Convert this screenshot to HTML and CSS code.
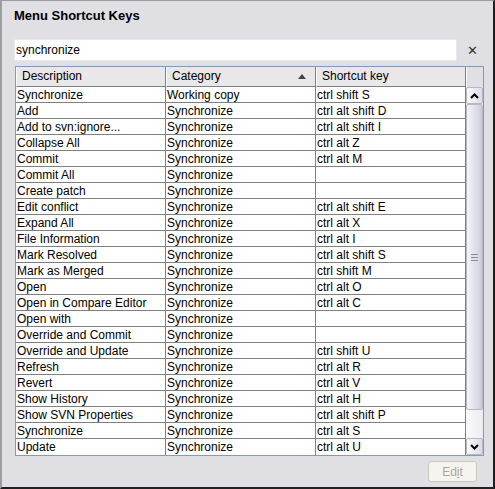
FILE: index.html
```html
<!DOCTYPE html>
<html>
<head>
	<title>Menu Shortcut Keys</title>
	<link rel="stylesheet" href="styles.css">
</head>
<body>
	<div class="window">
		<h1 class="title">Menu Shortcut Keys</h1>

		<div class="search-row">
			<div class="search-box">synchronize</div>
			<span class="clear">&#x2715;</span>
		</div>

		<div class="frame">
			<div class="head">
				<div class="hcell">Description</div>
				<div class="hcell sorted">Category <span class="arrow"></span></div>
				<div class="hcell">Shortcut key</div>
				<div class="hcell corner"></div>
			</div>
			<div class="body">
				<div class="rows" id="rows"></div>
				<div class="scrollbar">
					<div class="sbtn"><svg width="9" height="6" viewBox="0 0 9 6"><path d="M1 5 L4.5 1.5 L8 5" fill="none" stroke="#000" stroke-width="2"/></svg></div>
					<div class="thumb"><span class="grip"></span></div>
					<div class="track"></div>
					<div class="sbtn"><svg width="9" height="6" viewBox="0 0 9 6"><path d="M1 1 L4.5 4.5 L8 1" fill="none" stroke="#000" stroke-width="2"/></svg></div>
				</div>
			</div>
		</div>

		<div class="footer">
			<button class="edit-btn" disabled>Ed<u>i</u>t</button>
		</div>
	</div>

	<script>
		// Shortcut list
		const items = [
			["Synchronize", "Working copy", "ctrl shift S"],
			["Add", "Synchronize", "ctrl alt shift D"],
			["Add to svn:ignore...", "Synchronize", "ctrl alt shift I"],
			["Collapse All", "Synchronize", "ctrl alt Z"],
			["Commit", "Synchronize", "ctrl alt M"],
			["Commit All", "Synchronize", ""],
			["Create patch", "Synchronize", ""],
			["Edit conflict", "Synchronize", "ctrl alt shift E"],
			["Expand All", "Synchronize", "ctrl alt X"],
			["File Information", "Synchronize", "ctrl alt I"],
			["Mark Resolved", "Synchronize", "ctrl alt shift S"],
			["Mark as Merged", "Synchronize", "ctrl shift M"],
			["Open", "Synchronize", "ctrl alt O"],
			["Open in Compare Editor", "Synchronize", "ctrl alt C"],
			["Open with", "Synchronize", ""],
			["Override and Commit", "Synchronize", ""],
			["Override and Update", "Synchronize", "ctrl shift U"],
			["Refresh", "Synchronize", "ctrl alt R"],
			["Revert", "Synchronize", "ctrl alt V"],
			["Show History", "Synchronize", "ctrl alt H"],
			["Show SVN Properties", "Synchronize", "ctrl alt shift P"],
			["Synchronize", "Synchronize", "ctrl alt S"],
			["Update", "Synchronize", "ctrl alt U"]
		];

		const rows = document.getElementById("rows");
		items.forEach(item => {
			const row = document.createElement("div");
			row.classList.add("row");
			item.forEach(text => {
				const cell = document.createElement("div");
				cell.classList.add("cell");
				cell.textContent = text;
				row.appendChild(cell);
			});
			rows.appendChild(row);
		});
	</script>
</body>
</html>
```

FILE: styles.css
```css
* {
	margin: 0;
	padding: 0;
	box-sizing: border-box;
	font-family: 'Liberation Sans', Arial, sans-serif;
}
body {
	background-color: #e0dfe3;
	font-size: 11px;
}
.window {
	width: 495px;
	height: 489px;
	background-color: #e0dfe3;
	border-top: 1px solid #9d9da1;
	border-left: 2px solid #9d9da1;
	border-right: 2px solid #202020;
	border-bottom: 2px solid #202020;
	padding: 7px 0 0 12px;
}
.title {
	font-size: 13px;
	font-weight: bold;
	height: 16px;
	line-height: 16px;
	color: #000;
}
.search-row {
	display: flex;
	align-items: center;
	margin-top: 15px;
	height: 22px;
}
.search-box {
	width: 443px;
	height: 22px;
	background-color: #fff;
	border: 1px solid #e8e8ec;
	padding-left: 1px;
	line-height: 20px;
	font-size: 12px;
}
.clear {
	margin-left: 10px;
	font-size: 13px;
	color: #333;
}
.frame {
	margin-top: 5px;
	margin-left: 1px;
	width: 469px;
	height: 390px;
	border: 1px solid #7f9db9;
	background-color: #fff;
}
.head {
	display: flex;
	height: 20px;
	background-color: #e0dfe3;
}
.hcell {
	width: 150px;
	height: 20px;
	line-height: 19px;
	padding-left: 5px;
	font-size: 12px;
	background-color: #e8e8ea;
	border-left: 1px solid #fff;
	border-right: 1px solid #808080;
	border-bottom: 1px solid #808080;
	position: relative;
}
.hcell.corner {
	width: 17px;
	background-color: #e0dfe3;
	border-right: none;
	border-bottom: 1px solid #e0dfe3;
}
.arrow {
	position: absolute;
	right: 9px;
	top: 7px;
	border-left: 4px solid transparent;
	border-right: 4px solid transparent;
	border-bottom: 5px solid #444;
}
.body {
	display: flex;
	height: 368px;
}
.rows {
	width: 450px;
}
.row {
	display: flex;
	height: 16px;
	border-bottom: 1px solid #808080;
}
.row:last-child {
	border-bottom: none;
}
.cell {
	width: 150px;
	padding-left: 1px;
	line-height: 16px;
	font-size: 12px;
	border-right: 1px solid #808080;
	white-space: nowrap;
	overflow: hidden;
}
.scrollbar {
	width: 17px;
	display: flex;
	flex-direction: column;
	background-color: #f3f3f5;
}
.sbtn {
	height: 17px;
	display: flex;
	align-items: center;
	justify-content: center;
	border: 1px solid #b8b7c8;
	border-radius: 2px;
	background: linear-gradient(to right, #fafafc, #dcdbe6);
}
.thumb {
	height: 306px;
	border: 1px solid #b8b7c8;
	border-radius: 2px;
	background: linear-gradient(to right, #f4f4f8, #d6d6e2 80%, #c8c8d6);
	display: flex;
	align-items: center;
	justify-content: center;
}
.grip {
	width: 7px;
	height: 7px;
	border-top: 1px solid #8a8aa0;
	border-bottom: 1px solid #8a8aa0;
	background: linear-gradient(#e0e0ea 0, #e0e0ea 2px, #8a8aa0 2px, #8a8aa0 3px, #e0e0ea 3px);
}
.track {
	flex: 1;
	background: linear-gradient(to right, #fafafc, #ececf0);
}
.footer {
	display: flex;
	justify-content: flex-end;
	margin-top: 5px;
	width: 463px;
}
.edit-btn {
	width: 49px;
	height: 21px;
	background-color: #f5f4ef;
	border: 1px solid #cac8bb;
	border-radius: 3px;
	color: #aca899;
	font-size: 12px;
	font-family: 'Liberation Sans', Arial, sans-serif;
}
```
